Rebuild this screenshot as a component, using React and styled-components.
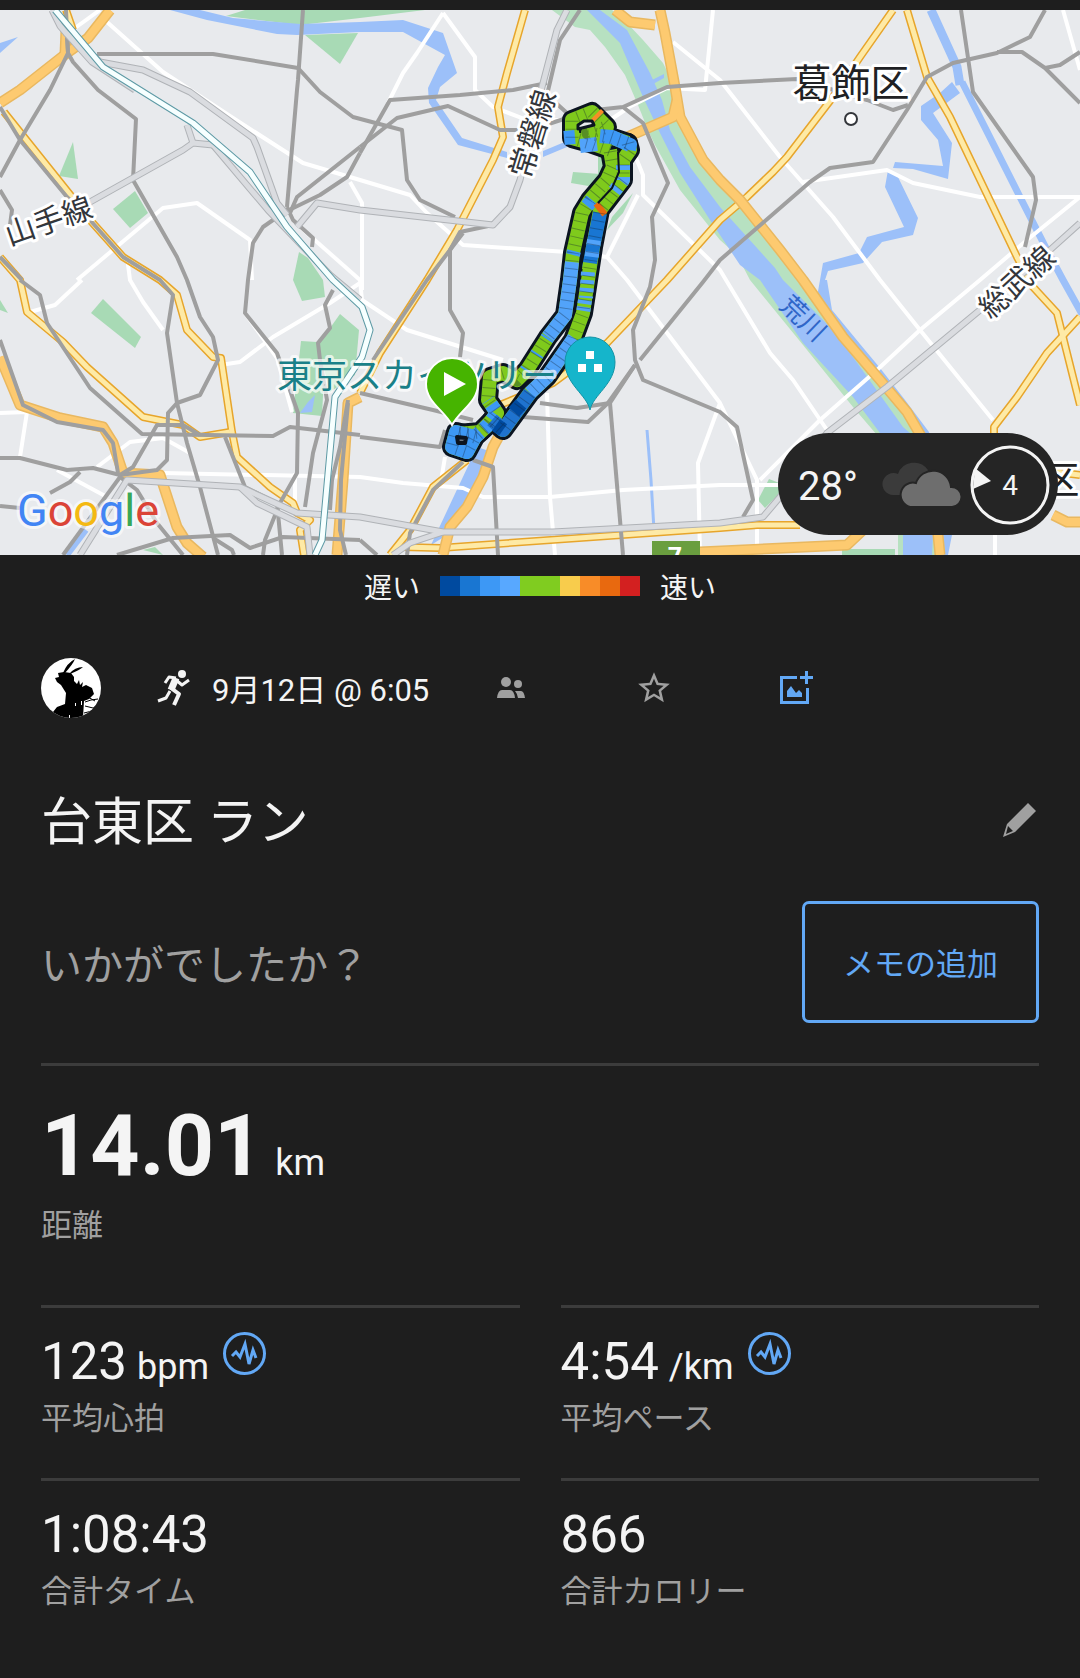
import React from 'react';
import styled, { createGlobalStyle } from 'styled-components';
import { MdStarBorder } from 'react-icons/md';

const GlobalStyle = createGlobalStyle`
  * {
    box-sizing: border-box;
  }
  body {
    margin: 0;
    background: #1e1e1e;
    color: #f4f4f4;
    font-family: Roboto, 'Noto Sans CJK JP', sans-serif;
  }
`;

const blue = '#62a8f5';
const muted = '#a0a0a0';

const Page = styled.main`
  padding-top: 10px;
  min-height: 100vh;
`;

const MapArea = styled.section`
  position: relative;
  height: 545px;
  overflow: hidden;
  background: #e8eaed;
`;

const MapSvg = styled.svg`
  display: block;
  width: 100%;
  height: 100%;
`;

const Weather = styled.div`
  position: absolute;
  right: 22px;
  bottom: 20px;
  display: flex;
  align-items: center;
  justify-content: flex-end;
  gap: 8px;
  width: 280px;
  height: 102px;
  padding: 2px 8px 0 20px;
  border-radius: 51px;
  background: #252525;
`;

const Temperature = styled.span`
  flex: 1;
  padding-top: 4px;
  font-size: 40px;
  line-height: 48px;
`;

const Legend = styled.div`
  display: flex;
  align-items: center;
  justify-content: center;
  gap: 20px;
  height: 62px;
  font-size: 28px;
  line-height: 40px;
`;

const LegendLabel = styled.span`
  padding-top: 6px;
`;

const Scale = styled.div`
  display: flex;
`;

const Swatch = styled.span`
  width: 20px;
  height: 20px;
  background: ${props => props.$color};
`;

const Content = styled.div`
  padding: 41px 41px 0;
`;

const ActivityBar = styled.div`
  display: flex;
  align-items: center;
  height: 60px;
`;

const ActivityDate = styled.div`
  display: flex;
  align-items: center;
  gap: 22px;
  margin-left: 56px;
  width: 282px;
  font-size: 31px;
  line-height: 40px;
  white-space: nowrap;
`;

const DateText = styled.time`
  padding-top: 6px;
`;

const IconButton = styled.button`
  display: flex;
  align-items: center;
  justify-content: ${props => props.$align || 'center'};
  width: 143px;
  height: 60px;
  padding: 0 2px;
  border: 0;
  background: none;
  color: ${props => props.$color || muted};
`;

const TitleRow = styled.div`
  display: flex;
  align-items: center;
  justify-content: space-between;
  height: 80px;
  margin-top: 62px;
`;

const Title = styled.h1`
  margin: 0;
  padding-top: 6px;
  font-size: 51px;
  line-height: 80px;
  font-weight: 400;
`;

const NoteRow = styled.div`
  display: flex;
  align-items: center;
  justify-content: space-between;
  margin-top: 41px;
  padding-bottom: 40px;
  border-bottom: 3px solid #3c3c3c;
`;

const Prompt = styled.p`
  margin: 0;
  padding-top: 8px;
  font-size: 41px;
  line-height: 60px;
  color: ${muted};
`;

const NoteButton = styled.button`
  height: 122px;
  padding: 6px 38px 0;
  border: 3px solid ${blue};
  border-radius: 7px;
  background: none;
  color: ${blue};
  font-family: inherit;
  font-size: 31px;
  line-height: 40px;
`;

const Stats = styled.dl`
  display: grid;
  grid-template-columns: 1fr 1fr;
  column-gap: 41px;
  margin: 0;
`;

const Stat = styled.div`
  display: flex;
  flex-direction: column-reverse;
  justify-content: flex-end;
  gap: ${props => (props.$main ? '12px' : '7px')};
  grid-column: ${props => (props.$main ? '1 / -1' : 'auto')};
  height: ${props => (props.$main ? '239px' : '173px')};
  padding-top: ${props => (props.$main ? '32px' : '24px')};
  border-top: ${props => (props.$main ? '0' : '3px solid #3c3c3c')};
`;

const StatLabel = styled.dt`
  font-size: 31px;
  line-height: 40px;
  color: ${muted};
`;

const StatValue = styled.dd`
  display: flex;
  align-items: baseline;
  margin: 0;
  font-size: ${props => (props.$main ? '86px' : '51px')};
  line-height: ${props => (props.$main ? '96px' : '60px')};
  font-weight: ${props => (props.$main ? 700 : 400)};
`;

const Unit = styled.span`
  margin-left: ${props => (props.$main ? '12px' : '10px')};
  font-size: 36px;
  line-height: 48px;
  font-weight: 400;
`;

const ChartButton = styled.button`
  align-self: flex-start;
  display: flex;
  margin: 0 0 0 14px;
  padding: 0;
  border: 0;
  background: none;
  color: ${blue};
`;

const paceColors = [
  '#004a9f',
  '#1976d2',
  '#3d98f5',
  '#58a8ff',
  '#80cc20',
  '#80cc20',
  '#f8cc4c',
  '#f88c28',
  '#e8690f',
  '#d32020',
];

const stats = [
  { label: '距離', value: '14.01', unit: 'km', main: true },
  { label: '平均心拍', value: '123', unit: 'bpm', chart: true },
  { label: '平均ペース', value: '4:54', unit: '/km', chart: true },
  { label: '合計タイム', value: '1:08:43' },
  { label: '合計カロリー', value: '866' },
];

const parks = [
  '226,16 245,10 425,10 360,18 300,25',
  '305,35 358,33 340,64',
  '73,142 59,176 78,179',
  '113,209 135,191 148,213 130,228',
  '299,252 293,280 302,301 325,297 323,280 308,258',
  '0,300 8,313 0,310',
  '103,299 141,337 135,348 91,313',
  '340,314 359,330 355,375 330,392 318,345',
  '301,341 317,342 325,355 322,416 293,413',
  '143,550 155,547 163,555',
  '571,183 573,172 600,174 600,188',
  '598,153 605,153 602,178 598,175',
  '607,230 612,217 633,193 623,213',
  '758,500 769,479 782,484 778,495 765,508',
  '842,555 842,549 895,549 895,555',
];

// both banks of the Arakawa
const banks =
  '552,10 575,27 590,30 605,47 625,75 638,105 648,130 655,145 680,190 720,240 737,255 750,280 803,345 853,407 877,435 898,535 898,555 940,555 938,535 920,433 880,380 843,337 803,280 780,250 740,200 703,160 680,120 675,87 663,63 643,40 627,23 612,10';

const waters = [
  '587,10 620,43 643,97 660,133 680,173 710,220 740,265 760,280 803,343 853,397 880,433 903,535 903,555 932,555 933,535 910,433 903,427 853,357 830,327 783,280 775,268 720,207 690,167 670,130 662,100 650,73 627,30 600,10',
  '652,80 664,74 664,78 653,84',
  '820,280 827,280 832,310 860,344 880,368 905,400 929,432 952,535 948,555 935,555 938,535 915,433 880,380 843,337 817,297',
  '170,10 207,20 277,34 297,35 360,32 403,32 445,55 438,67 428,88 429,103 458,145 507,158 507,152 462,138 436,100 440,87 457,73 443,33 403,20 360,22 300,24 233,18 200,10',
  '543,157 567,147 567,141 543,151',
  '0,43 18,37 0,53',
  '315,395 312,412 300,413 308,402',
  '952,82 940,93 921,106 921,120 938,140 943,166 895,162 893,168 913,169 948,179 952,143 933,113 960,93',
  '888,170 885,187 904,227 867,237 859,253 823,263 820,280 825,280 828,271 863,263 882,242 913,235 918,218 897,175',
  '477,447 492,452 447,535 431,545',
];

const waterLines = [
  { points: '931,10 957,67 960,85', width: 9 },
  { points: '962,82 1020,197 1047,250 1063,280 1082,314', width: 7 },
  { points: '647,430 651,480 654,530', width: 3 },
  { points: '67,555 86,530', width: 6 },
];

const streets = [
  '107,22 163,72 233,118 303,163 360,180 410,195 427,213 463,245 567,252 607,257 627,280 720,403 757,480 757,545',
  '443,13 417,53 403,73 388,103',
  '443,13 475,57 475,90 493,107 527,120 610,120 625,110',
  '77,280 163,208 197,203 250,240 252,280',
  '350,182 362,203 362,290',
  '300,227 360,280 362,300 407,330 503,360',
  '75,28 100,10',
  '82,280 55,305 30,312',
  '127,257 130,280 143,302 163,330',
  '220,365 240,362 273,337 330,303 360,283',
  '0,413 27,412 20,457',
  '97,467 130,442 163,438 190,453',
  '57,470 107,497',
  '163,473 360,477 403,483 463,488 483,497 550,497 623,490 720,485 785,485',
  '547,393 550,497 555,555',
  '720,403 698,463 700,555',
  '673,42 720,80 780,157 833,217 880,280 920,330 993,420',
  '713,10 705,90 667,88 623,110',
  '803,182 887,170 913,183 980,197 1080,197 1027,240 980,280 920,330 877,370 820,420 760,480',
  '1063,10 1080,70',
  '632,148 643,175 643,195 720,270 770,353 793,380 827,430',
  '638,195 607,257',
  '995,530 995,555',
  '445,457 440,487',
  '295,473 295,505',
  '245,313 277,358 292,412',
];

const yellowRoads = [
  '525,10 507,73 498,107 503,137 493,160 457,230 427,280 380,353 360,393',
  '893,10 860,57 833,97 787,157 773,172 747,197 720,220 667,280 607,343 553,383 500,405',
  '907,10 927,77 950,117 1017,257 1033,287 1057,313 1080,405',
  '1080,317 1047,353 1017,397 994,427 994,434',
  '4,112 72,197 90,220 123,257 160,280 177,295 187,330 213,357 221,358 232,432 237,457 270,487 293,503 297,513 310,520 300,530 304,555',
  '0,257 20,280 27,312 63,342 87,367 143,417 183,425 200,437 230,432',
  '403,547 440,548 593,537 720,528 757,525 800,525',
  '66,10 73,30',
  '467,460 433,487 410,530 390,555',
  '1055,472 1080,475',
];

const highways = [
  '110,10 88,38 67,53 20,90 0,103',
  '66,30 65,55',
  '0,357 20,405 60,418 103,427 113,443 123,473 160,475 177,527 187,543 203,557',
  '360,397 348,403 343,480 337,555',
  '505,425 493,447 483,477 467,507 450,527 443,555',
  '660,10 665,33 675,87 680,117 703,160 720,180 740,200 780,250 803,280 843,337 880,380 907,412 921,436 938,535 940,555',
  '615,10 630,22 655,25',
  '625,138 673,117 677,100',
  '700,552 847,545 863,530',
  '1053,515 1067,522 1080,522',
];

const railways = [
  '97,54 213,54 298,68 320,92 353,117 402,130 407,180 420,200 455,217',
  '303,10 298,80 297,90 287,207',
  '66,10 68,53 73,62 98,90 136,119 133,180 177,257 187,280 200,317 213,337 218,360 200,395 177,403 168,413 167,460 157,470 120,475',
  '67,37 68,53 50,90 20,140 0,177',
  '0,107 20,140 67,197 90,220 123,257 160,280 173,295 167,333 177,403 187,443 200,487 218,555',
  '20,280 40,295 47,323 90,388 142,434 273,436 290,427 360,435',
  '0,257 22,280',
  '0,190 12,210 10,225',
  '0,340 23,405 57,422 103,430 113,443 118,473',
  '0,458 20,458 67,470 93,468 120,475 133,467 157,425 183,425 200,435',
  '50,493 70,482 80,472',
  '0,506 20,508',
  '120,477 63,555',
  '120,477 137,490 157,523 183,555',
  '117,555 173,538 230,535 250,548 283,537 360,540',
  '213,538 232,550 234,555',
  '360,147 297,197 290,213',
  '360,153 347,177 320,195 283,213',
  '360,147 397,118 448,106 500,130 530,130 567,118',
  '360,153 390,100 460,95 513,90 547,83',
  '283,213 263,227 253,243 248,280 245,313 277,353 298,413 297,473 280,503 265,540 263,555',
  '287,207 293,220 313,238 312,247',
  '333,290 325,305 330,328 318,343 320,360 327,400 313,453 305,507',
  '348,400 340,447 332,480 330,510',
  '348,403 341,480 340,530 346,555',
  '225,437 245,487 277,503 282,555',
  '580,10 560,40 547,95 567,113',
  '567,113 623,107 667,87 720,83 797,79 867,100 893,110 908,105',
  '623,107 643,123 668,183 652,217 655,260 650,287 633,330 635,360 643,380 720,412 737,427 753,500 743,517',
  '640,360 703,282 720,260 810,182 830,168 873,162 907,110 927,77 953,63 997,53 1030,37 1045,10',
  '997,52 1022,52 1045,68 1080,103',
  '1045,68 1060,65 1080,52',
  '961,10 973,92 1033,177 1036,200 1025,247',
  '635,365 610,403 577,408 540,403',
  '635,365 608,403 588,422 523,417',
  '610,403 623,555',
  '493,225 460,232 450,250 450,310 463,333 460,357',
  '463,233 427,280 373,360',
  '360,393 433,410 473,420',
  '360,437 440,447 445,430',
  '473,460 493,467 498,555',
  '463,462 433,490 410,533 407,555',
  '360,540 377,555',
];

const jrLines = [
  '567,10 557,30 542,87 520,180 510,207 493,225 360,210 317,203 297,227',
  '52,10 60,26 66,33 100,62 143,70 190,92 253,138 257,147 277,203 287,215',
  '90,202 183,150 193,143 213,145',
  '187,125 193,143',
  '66,33 92,62 135,90',
  '213,145 268,210 330,275 360,300',
  '80,555 127,480 240,487 297,513 360,517 443,532 553,532 720,523 763,517 780,497 827,433 887,387 980,310 1050,250 1080,223',
  '240,487 257,503 307,527 310,555',
  '443,532 410,543 393,555',
];

const shinkansen =
  '55,10 103,67 193,123 250,172 287,227 333,280 362,307 370,330 362,357 335,397 322,540 315,555';

const outbound =
  '475,437 456,432 452,447 467,452 475,437 488,425 497,413 488,400 490,377 503,373 517,380 527,370 548,337 565,315 570,280 573,253 582,213 590,200 607,180 613,167 610,150';
const topLoop = '610,150 590,143 572,138 572,120 592,112 607,127 588,133 610,137 628,143';
const inbound =
  '628,143 630,150 623,160 623,180 600,210 593,247 588,280 583,313 573,340 547,377 530,393 503,430 492,420 480,432 458,434';

const paceRuns = [
  { points: '475,437 456,432 452,447 467,452 475,437 458,434', color: '#3d98f5' },
  { points: '475,437 488,425 497,413 488,400', color: '#3d98f5', dash: '7 5' },
  { points: '548,337 565,315 570,280 572,262', color: '#52a3fa' },
  { points: '526,371 548,337', color: '#3d98f5', dash: '2 17' },
  { points: '587,206 592,200', color: '#3d98f5' },
  { points: '573,255 574,251', color: '#3d98f5' },
  { points: '564,138 575,137', color: '#3d98f5' },
  { points: '580,146 597,144', color: '#52a3fa' },
  { points: '600,136 612,137 630,145 629,150', color: '#3d98f5' },
  { points: '623,165 623,180 612,194', color: '#52a3fa', dash: '5 7' },
  { points: '600,213 593,247 589,268', color: '#1976d2' },
  { points: '594,240 591,262', color: '#52a3fa', dash: '5 7' },
  { points: '590,263 589,270', color: '#80cc20' },
  { points: '588,272 586,298', color: '#52a3fa', dash: '4 4' },
  { points: '585,300 583,313', color: '#52a3fa', dash: '4 3' },
  { points: '574,338 547,377 530,393', color: '#52a3fa' },
  { points: '530,393 503,430 492,420', color: '#1f73cf' },
  { points: '521,404 514,412', color: '#004a9f' },
  { points: '496,425 503,430', color: '#004a9f' },
  { points: '598,211 603,207', color: '#e8690f' },
  { points: '596,114 599,117', color: '#f88c28' },
];

function RoadLayer({ lines, casing, fill, outer, inner }) {
  return (
    <g fill="none" strokeLinejoin="round">
      {lines.map(points => (
        <polyline key={points} points={points} stroke={casing} strokeWidth={outer} />
      ))}
      {lines.map(points => (
        <polyline key={points} points={points} stroke={fill} strokeWidth={inner} />
      ))}
    </g>
  );
}

function Route() {
  const tracks = [outbound, topLoop, inbound];
  return (
    <g fill="none" strokeLinejoin="round">
      <g stroke="#0b1420" strokeWidth="20" strokeLinecap="round">
        {tracks.map(points => (
          <polyline key={points} points={points} />
        ))}
      </g>
      <g stroke="#7fca1c" strokeWidth="14">
        {tracks.map(points => (
          <polyline key={points} points={points} />
        ))}
      </g>
      {paceRuns.map(run => (
        <polyline
          key={run.points}
          points={run.points}
          stroke={run.color}
          strokeWidth="14"
          strokeDasharray={run.dash}
        />
      ))}
      <g stroke="#123" strokeOpacity="0.35" strokeWidth="13" strokeDasharray="1 7">
        {tracks.map(points => (
          <polyline key={points} points={points} />
        ))}
      </g>
      <polyline points="598,203 612,188 619,172 618,152" stroke="#0b1420" strokeWidth="2" />
      <polygon points="578,125 584,121 592,121 594,125 586,127 578,129" fill="#e8eaed" stroke="#0b1420" strokeWidth="3" />
      <polygon points="457,437 466,438 465,443 458,443" fill="#6a7480" stroke="#0b1420" strokeWidth="4" />
    </g>
  );
}

function Labels() {
  return (
    <g
      fontFamily="'Noto Sans CJK JP', sans-serif"
      textAnchor="middle"
      stroke="#fff"
      strokeWidth="6"
      strokeLinejoin="round"
      paintOrder="stroke"
      fill="#33363b"
    >
      <text fontSize="30" transform="translate(543 137) rotate(-73)">
        常磐線
      </text>
      <text fontSize="30" transform="translate(52 231) rotate(-19)">
        山手線
      </text>
      <text fontSize="30" transform="translate(1024 290) rotate(-42)">
        総武線
      </text>
      <text fontSize="26" transform="translate(797 325) rotate(44)" fill="#2f66c8" stroke="none">
        荒川
      </text>
      <text fontSize="39" x="851" y="97" fill="#202124">
        葛飾区
      </text>
      <text fontSize="39" x="1060" y="494" fill="#202124">
        区
      </text>
      <circle cx="851" cy="119" r="7" fill="#33363b" stroke="none" />
      <circle cx="851" cy="119" r="5" fill="#fff" stroke="none" />
    </g>
  );
}

function ActivityMap() {
  return (
    <MapSvg viewBox="0 10 1080 545" preserveAspectRatio="xMidYMid slice" role="img" aria-label="ルート">
      <rect x="0" y="10" width="1080" height="545" fill="#e8eaed" />
      {parks.map(points => (
        <polygon key={points} points={points} fill="#a8dab5" />
      ))}
      <polygon points={banks} fill="#b7e1c1" />
      {waters.map(points => (
        <polygon key={points} points={points} fill="#9cc0f9" />
      ))}
      {waterLines.map(line => (
        <polyline key={line.points} points={line.points} fill="none" stroke="#9cc0f9" strokeWidth={line.width} />
      ))}
      <g fill="none" stroke="#fff" strokeWidth="4" strokeLinejoin="round">
        {streets.map(points => (
          <polyline key={points} points={points} />
        ))}
      </g>
      <RoadLayer lines={yellowRoads} casing="#e7a52b" fill="#feeaa6" outer={8} inner={5} />
      <RoadLayer lines={highways} casing="#e9b860" fill="#fdca70" outer={11} inner={8} />
      <g fill="none" stroke="#9f9f9f" strokeWidth="4" strokeLinejoin="round">
        {railways.map(points => (
          <polyline key={points} points={points} />
        ))}
      </g>
      <RoadLayer lines={jrLines} casing="#b0b3b7" fill="#dadce0" outer={7} inner={5} />
      <RoadLayer lines={[shinkansen]} casing="#5d9aa5" fill="#f6ffff" outer={7} inner={5} />
      <Route />
      <Labels />
      <text
        x="277"
        y="388"
        fontSize="35"
        fontFamily="'Noto Sans CJK JP', sans-serif"
        fill="#1a8088"
        stroke="#fff"
        strokeWidth="6"
        strokeOpacity="0.7"
        strokeLinejoin="round"
        paintOrder="stroke"
      >
        東京スカイツリー
      </text>
      <path
        d="M590 410C587 395 565 384 565 362a25 25 0 0 1 50 0C615 384 593 395 590 410Z"
        fill="#15b5cb"
        stroke="#1294a6"
      />
      <path d="M586 351h8v8h-8ZM578 364h8v8h-8ZM594 364h8v8h-8Z" fill="#fff" />
      <path
        d="M452 425C444 410 426 402 426 384a26 26 0 0 1 52 0C478 402 460 410 452 425Z"
        fill="#46b400"
        stroke="#fff"
        strokeWidth="2"
      />
      <path d="M444 372 466 384 444 396Z" fill="#fff" />
      <rect x="652" y="541" width="48" height="20" fill="#6a9e3f" />
      <text x="675" y="566" fontSize="25" fontWeight="700" fontFamily="Roboto, sans-serif" textAnchor="middle" fill="#fff">
        7
      </text>
      <text
        x="17"
        y="526"
        fontSize="45"
        fontFamily="Roboto, sans-serif"
        stroke="#fff"
        strokeOpacity="0.6"
        strokeWidth="6"
        strokeLinejoin="round"
        paintOrder="stroke"
      >
        <tspan fill="#4285f4">G</tspan>
        <tspan fill="#db4437">o</tspan>
        <tspan fill="#f4b912">o</tspan>
        <tspan fill="#4285f4">g</tspan>
        <tspan fill="#3aa757">l</tspan>
        <tspan fill="#db4437">e</tspan>
      </text>
    </MapSvg>
  );
}

function CloudIcon() {
  return (
    <svg width="80" height="46" viewBox="0 0 80 46" aria-hidden="true">
      <path d="M11 33a11 11 0 1 1 5-21A17 17 0 0 1 46 8L42 33Z" fill="#3b3b3b" />
      <path
        d="M28 45a12 12 0 1 1 6-24A18 18 0 0 1 69 25a10 10 0 1 1 1 20Z"
        fill="#6e6e6e"
        stroke="#252525"
        strokeWidth="2"
      />
    </svg>
  );
}

function WindIcon() {
  return (
    <svg width="80" height="80" viewBox="0 0 80 80" role="img" aria-label="風速">
      <circle cx="40" cy="40" r="38" fill="none" stroke="#f4f4f4" strokeWidth="3" />
      <path d="M5 23 21 36 3 44Z" fill="#f4f4f4" />
      <text x="40" y="50" fontSize="28" fontFamily="Roboto, sans-serif" textAnchor="middle" fill="#f4f4f4">
        4
      </text>
    </svg>
  );
}

function Avatar() {
  return (
    <svg width="60" height="60" viewBox="0 0 60 60" role="img" aria-label="プロフィール">
      <clipPath id="avatar">
        <circle cx="30" cy="30" r="30" />
      </clipPath>
      <g clipPath="url(#avatar)">
        <rect width="60" height="60" fill="#fff" />
        <path d="M22 15Q26 5 34 1Q32 6 24 15M28 16Q34 9 42 9Q39 12 29 16" />
        <path d="M14 20 18 19 17 15 23 14 30 15 33 19 33 23 36 26 38 22 39 27 42 24 41 29 45 27 51 30 53 36 48 41 43 43 42 60 14 60 12 54 16 49 24 46 25 35 20 27 16 24Z" />
        <path d="M44 44 50 42 57 41M44 48 52 50 57 46M43 55 51 53M47 39 54 43" fill="none" stroke="#000" />
        <path d="M34 45h1v3h-1ZM40 43h1v4h-1ZM28 57h1v3h-1Z" fill="#fff" />
      </g>
    </svg>
  );
}

function RunnerIcon() {
  return (
    <svg width="33" height="36" viewBox="0 0 33 36" aria-hidden="true">
      <circle cx="25" cy="4" r="4" fill="#f4f4f4" />
      <g fill="none" stroke="#f4f4f4" strokeLinejoin="round">
        <path d="M8 13 12 7 19 8" strokeWidth="3" />
        <path d="M19 8 14 20" strokeWidth="7" />
        <path d="M19 10 25 15 32 10" strokeWidth="3" />
        <path d="M14 18 22 24 17 35" strokeWidth="4" />
        <path d="M13 21 9 28 1 31" strokeWidth="3" />
      </g>
    </svg>
  );
}

function PeopleIcon() {
  return (
    <svg width="28" height="22" viewBox="0 0 28 22" fill="currentColor" aria-hidden="true">
      <circle cx="9" cy="5" r="5" />
      <circle cx="21" cy="7" r="4" />
      <path d="M0 21Q1 13 5 13H13Q17 13 18 21ZM18 14H24Q27 14 28 21H21Q20 16 18 14Z" />
    </svg>
  );
}

function AddPhotoIcon() {
  return (
    <svg width="34" height="34" viewBox="0 0 34 34" fill="currentColor" aria-hidden="true">
      <path d="M0 5H17V8H3V30H26V17H29V33H0ZM25 0h3v5h5v3h-5v5h-3V8h-5V5h5Z" />
      <path d="M7 26V20L11 15 16 22 19 19 22 22V26Z" />
    </svg>
  );
}

function PencilIcon() {
  return (
    <svg width="34" height="34" viewBox="0 0 34 34" aria-hidden="true">
      <path
        fill="currentColor"
        fillRule="evenodd"
        d="M25 0 33 8 12 29 0 34 4 21ZM5 23 3 31 10 28Z"
      />
    </svg>
  );
}

function WaveIcon() {
  return (
    <svg width="43" height="43" viewBox="0 0 43 43" fill="none" stroke="currentColor" aria-hidden="true">
      <circle cx="21.500" cy="21.500" r="20" strokeWidth="3" />
      <path d="M9 24 13 20 17 25 22 12 26 32 30 18 33 26" strokeWidth="3" />
    </svg>
  );
}

export default function App() {
  return (
    <Page>
      <GlobalStyle />
      <MapArea>
        <ActivityMap />
        <Weather>
          <Temperature>28°</Temperature>
          <CloudIcon />
          <WindIcon />
        </Weather>
      </MapArea>
      <Legend>
        <LegendLabel>遅い</LegendLabel>
        <Scale>
          {paceColors.map((color, index) => (
            <Swatch key={index} $color={color} />
          ))}
        </Scale>
        <LegendLabel>速い</LegendLabel>
      </Legend>
      <Content>
        <ActivityBar>
          <Avatar />
          <ActivityDate>
            <RunnerIcon />
            <DateText>9月12日 @ 6:05</DateText>
          </ActivityDate>
          <IconButton aria-label="プライバシー">
            <PeopleIcon />
          </IconButton>
          <IconButton aria-label="お気に入り">
            <MdStarBorder size={38} />
          </IconButton>
          <IconButton aria-label="写真を追加" $color={blue}>
            <AddPhotoIcon />
          </IconButton>
        </ActivityBar>
        <TitleRow>
          <Title>台東区 ラン</Title>
          <IconButton aria-label="名前を編集" $align="flex-end">
            <PencilIcon />
          </IconButton>
        </TitleRow>
        <NoteRow>
          <Prompt>いかがでしたか？</Prompt>
          <NoteButton>メモの追加</NoteButton>
        </NoteRow>
        <Stats>
          {stats.map(stat => (
            <Stat key={stat.label} $main={stat.main}>
              <StatLabel>{stat.label}</StatLabel>
              <StatValue $main={stat.main}>
                {stat.value}
                {stat.unit && <Unit $main={stat.main}>{stat.unit}</Unit>}
                {stat.chart && (
                  <ChartButton aria-label={`${stat.label}のグラフ`}>
                    <WaveIcon />
                  </ChartButton>
                )}
              </StatValue>
            </Stat>
          ))}
        </Stats>
      </Content>
    </Page>
  );
}
